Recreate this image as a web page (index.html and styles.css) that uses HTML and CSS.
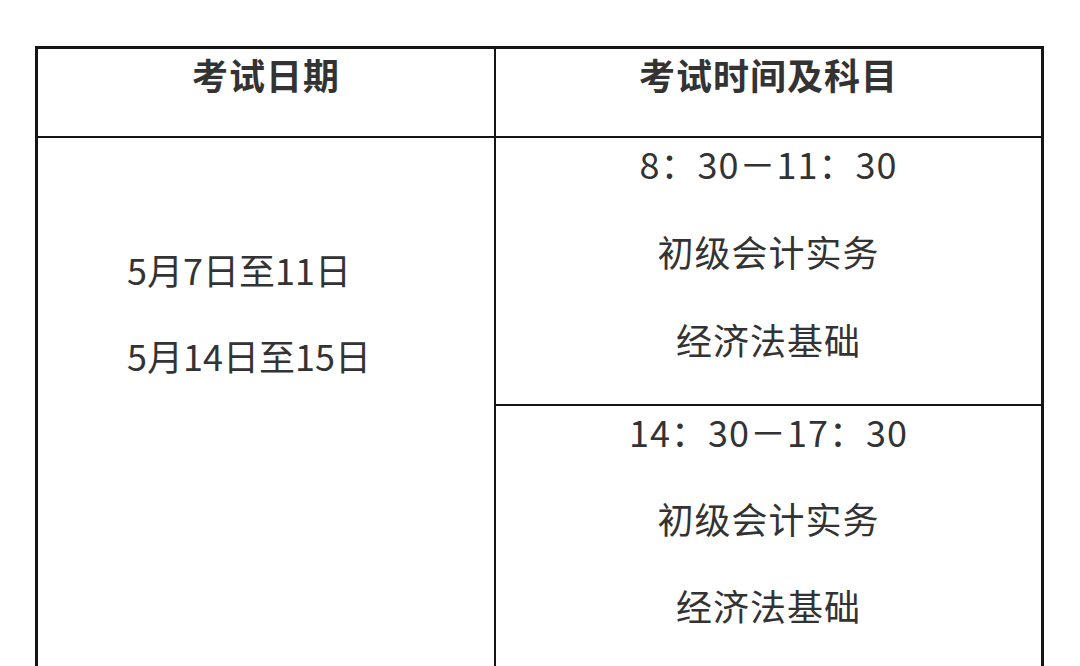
FILE: index.html
```html
<!DOCTYPE html>
<html lang="zh-CN">
<head>
<meta charset="utf-8">
<title>考试安排</title>
<link rel="stylesheet" href="styles.css">
</head>
<body>
<div class="sheet">
  <div class="cell head left">考试日期</div>
  <div class="cell head right">考试时间及科目</div>
  <div class="cell dates left">
    <p>5月7日至11日</p>
    <p>5月14日至15日</p>
  </div>
  <div class="cell slot first">
    <p>8：30－11：30</p>
    <p>初级会计实务</p>
    <p>经济法基础</p>
  </div>
  <div class="cell slot second">
    <p>14：30－17：30</p>
    <p>初级会计实务</p>
    <p>经济法基础</p>
  </div>
</div>
</body>
</html>
```
FILE: styles.css
```css
html, body {
  margin: 0;
  padding: 0;
  background: #ffffff;
  overflow: hidden;
}
body {
  font-family: "Noto Sans CJK SC", "Noto Sans", sans-serif;
  color: #333333;
}
.sheet {
  margin: 46px 0 0 35px;
  width: 1009px;
  box-sizing: border-box;
  border: 3px solid #151515;
  display: grid;
  grid-template-columns: 458px 545px;
  grid-template-rows: 89px 268px 270px;
}
.cell {
  box-sizing: border-box;
  font-size: 36px;
  line-height: 50px;
  letter-spacing: 1px;
}
.cell p {
  margin: 0;
}
.left {
  border-right: 2px solid #151515;
}
.head {
  border-bottom: 2px solid #151515;
  font-weight: 700;
  text-align: center;
  padding-top: 0;
}
.dates {
  grid-row: 2 / span 2;
  padding: 106px 0 0 89px;
  display: flex;
  flex-direction: column;
  gap: 36px;
  letter-spacing: 0;
}
.slot {
  text-align: center;
  display: flex;
  flex-direction: column;
  gap: 38px;
}
.first {
  border-bottom: 2px solid #151515;
  padding-top: 0;
}
.second {
  padding-top: 0;
  gap: 37px;
}
```
